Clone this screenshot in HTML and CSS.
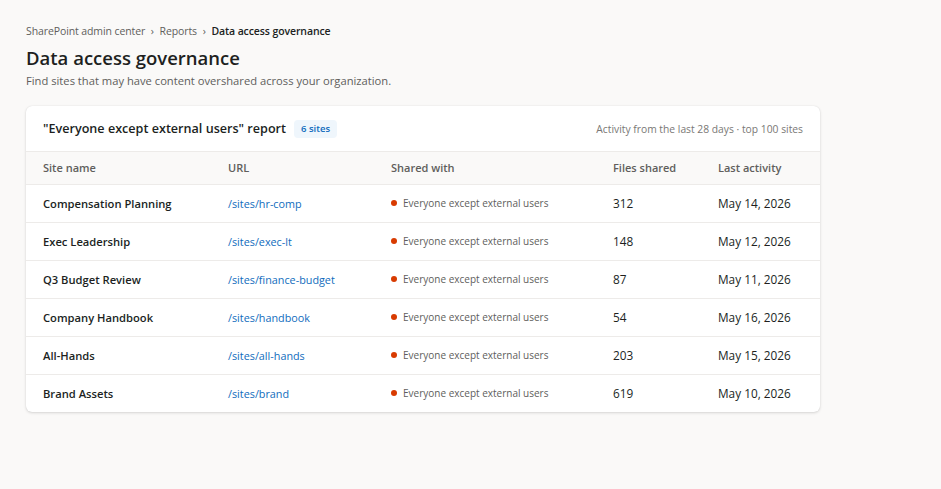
FILE: index.html
```html
<!DOCTYPE html>
<html>
	<head>
		<meta charset="utf-8">
		<title>Data access governance</title>
		<link rel="stylesheet" href="styles.css">
	</head>
	<body>
		<div class="page">
			<div class="crumbs">
				<span>SharePoint admin center</span>
				<span class="sep">&rsaquo;</span>
				<span>Reports</span>
				<span class="sep">&rsaquo;</span>
				<span class="current">Data access governance</span>
			</div>
			<h1 class="title">Data access governance</h1>
			<div class="subtitle">Find sites that may have content overshared across your organization.</div>

			<div class="card">
				<div class="cardHead">
					<div class="cardTitle">"Everyone except external users" report <span class="badge">6 sites</span></div>
					<div class="cardNote">Activity from the last 28 days &middot; top 100 sites</div>
				</div>
				<table class="grid">
					<thead>
						<tr>
							<th class="colName">Site name</th>
							<th class="colUrl">URL</th>
							<th class="colShared">Shared with</th>
							<th class="colFiles">Files shared</th>
							<th>Last activity</th>
						</tr>
					</thead>
					<tbody>
						<tr>
							<td class="site">Compensation Planning</td>
							<td><a class="url">/sites/hr-comp</a></td>
							<td class="shared"><span class="dot"></span>Everyone except external users</td>
							<td>312</td>
							<td>May 14, 2026</td>
						</tr>
						<tr>
							<td class="site">Exec Leadership</td>
							<td><a class="url">/sites/exec-lt</a></td>
							<td class="shared"><span class="dot"></span>Everyone except external users</td>
							<td>148</td>
							<td>May 12, 2026</td>
						</tr>
						<tr>
							<td class="site">Q3 Budget Review</td>
							<td><a class="url">/sites/finance-budget</a></td>
							<td class="shared"><span class="dot"></span>Everyone except external users</td>
							<td>87</td>
							<td>May 11, 2026</td>
						</tr>
						<tr>
							<td class="site">Company Handbook</td>
							<td><a class="url">/sites/handbook</a></td>
							<td class="shared"><span class="dot"></span>Everyone except external users</td>
							<td>54</td>
							<td>May 16, 2026</td>
						</tr>
						<tr>
							<td class="site">All-Hands</td>
							<td><a class="url">/sites/all-hands</a></td>
							<td class="shared"><span class="dot"></span>Everyone except external users</td>
							<td>203</td>
							<td>May 15, 2026</td>
						</tr>
						<tr>
							<td class="site">Brand Assets</td>
							<td><a class="url">/sites/brand</a></td>
							<td class="shared"><span class="dot"></span>Everyone except external users</td>
							<td>619</td>
							<td>May 10, 2026</td>
						</tr>
					</tbody>
				</table>
			</div>
		</div>
	</body>
</html>
```

FILE: styles.css
```css
body {
	margin: 0;
	background-color: #faf9f8;
	font-family: "Open Sans", "Noto Sans", sans-serif;
	color: #201f1e;
}

.page {
	padding: 22px 26px;
	width: 794px;
}

.crumbs {
	font-size: 10.5px;
	color: #605e5c;
	line-height: 18px;
	letter-spacing: -0.1px;
}

.crumbs .sep {
	margin: 0 3px;
}

.crumbs .current {
	color: #201f1e;
	font-weight: 600;
}

.title {
	margin: 5px 0 0 0;
	font-size: 18.5px;
	font-weight: 600;
	line-height: 26px;
}

.subtitle {
	font-size: 11.2px;
	color: #605e5c;
	line-height: 18px;
	margin-top: 1px;
}

.card {
	margin-top: 16px;
	background-color: #ffffff;
	border-radius: 6px;
	box-shadow: 0 1px 3px rgba(0, 0, 0, 0.14), 0 0 1px rgba(0, 0, 0, 0.12);
	overflow: hidden;
}

.cardHead {
	display: flex;
	justify-content: space-between;
	align-items: center;
	height: 45px;
	padding: 0 17px;
	border-bottom: 1px solid #edebe9;
}

.cardTitle {
	font-size: 12.6px;
	font-weight: 600;
	display: flex;
	align-items: center;
}

.badge {
	margin-left: 8px;
	background-color: #eff6fc;
	color: #0f6cbd;
	font-size: 9.5px;
	font-weight: 600;
	padding: 2px 7px;
	border-radius: 4px;
	line-height: 14px;
}

.cardNote {
	font-size: 10.3px;
	color: #797775;
}

.grid {
	width: 100%;
	border-collapse: collapse;
	table-layout: fixed;
}

.grid th,
.grid td {
	box-sizing: border-box;
	padding: 0 0 0 17px;
	border-bottom: 1px solid #edebe9;
	white-space: nowrap;
}

.grid th {
	text-align: left;
	font-size: 11px;
	font-weight: 600;
	color: #605e5c;
	background-color: #faf9f8;
	height: 32px;
}

.grid td {
	font-size: 11.8px;
	height: 38px;
}

.grid tbody tr:last-child td {
	border-bottom: none;
}

.colName { width: 185px; }
.colUrl { width: 163px; }
.colShared { width: 222px; }
.colFiles { width: 105px; }

.site {
	font-weight: 600;
	font-size: 11.2px !important;
}

.url {
	color: #0f6cbd;
	font-size: 10.8px;
}

.shared {
	font-size: 10px !important;
	color: #605e5c;
}

.dot {
	display: inline-block;
	width: 6px;
	height: 6px;
	border-radius: 50%;
	background-color: #d83b01;
	margin-right: 6px;
	vertical-align: 1px;
}
```
